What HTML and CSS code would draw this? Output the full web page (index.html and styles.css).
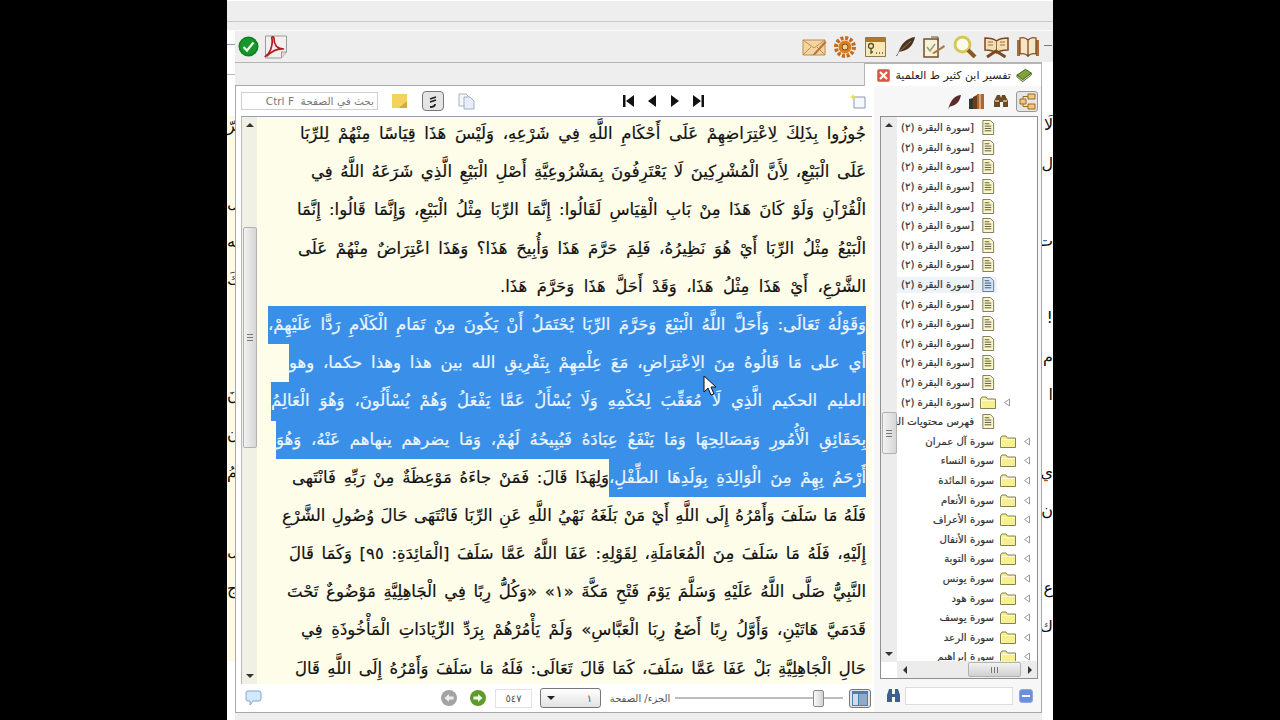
FILE: index.html
```html
<!DOCTYPE html>
<html lang="ar">
<head>
    <meta charset="UTF-8">
    <title>تفسير ابن كثير</title>
    <link rel="stylesheet" href="styles.css">
</head>
<body>
<svg class="defs" width="0" height="0">
    <symbol id="file" viewBox="0 0 15 16">
        <path d="M2 .5h8l3.5 3.5v11.5H2z" fill="#fbf6c8" stroke="#77745a"/>
        <path d="M4 4h5M4 6.5h7M4 9h7M4 11.500h7" stroke="#55523a"/>
    </symbol>
    <symbol id="file-blue" viewBox="0 0 15 16">
        <path d="M2 .5h8l3.500 3.500v11.500H2z" fill="#d6e6f7" stroke="#5f7890"/>
        <path d="M4 4h5M4 6.500h7M4 9h7M4 11.500h7" stroke="#33506b"/>
    </symbol>
    <symbol id="folder" viewBox="0 0 16 14">
        <path d="M.5 13V3.500l1.500-2h4l1.500 2h8V13z" fill="#f7f08f" stroke="#85824f"/>
        <path d="M1.500 12V5h13.500" fill="none" stroke="#fffbd0"/>
    </symbol>
    <symbol id="open" viewBox="0 0 8 9">
        <path d="M6.500 1v7L1.500 4.500z" fill="#fff" stroke="#9a9a9a"/>
    </symbol>
</svg>

<div class="window">
    <div class="top-strip"></div>
    <div class="body-row">
        <div class="behind behind-left">
            <span>لرّ</span><span></span><span>ال</span><span>يه</span><span>كَ</span><span></span><span></span><span>نَ</span><span>ن</span><span>مُ</span><span></span><span>ال</span><span>ج</span>
        </div>

        <div class="main">
            <div class="toolbar">
                <div class="tool-group">
                    <svg width="21" height="21" viewBox="0 0 21 21"><circle cx="10.500" cy="10.500" r="10" fill="#0d7f1e"/><circle cx="10.500" cy="10.500" r="8.500" fill="#16962b"/><path d="M5.500 11l3.500 3.500 6.500-8" fill="none" stroke="#eafbe8" stroke-width="2.200"/></svg>
                    <svg width="24" height="24" viewBox="0 0 24 24"><path d="M1.500 1h21v16l-5 6H1.500z" fill="#f1f0ee" stroke="#9a9a9a"/><path d="M17.500 23v-6h5" fill="#ddd" stroke="#9a9a9a"/><path d="M2 21c4-3 7-10 6-17-1-3 2-3 2 0 0 6 3 10 10 10-7-1-12 2-17 7z" fill="none" stroke="#b01c22" stroke-width="1.700"/></svg>
                </div>
                <div class="tool-group tool-right">
                    <svg width="25" height="20" viewBox="0 0 25 20"><path d="M1 3h22v15H1z" fill="#f3d5a5" stroke="#c08a4c"/><path d="M1 3l11 8 11-8M1 18l8-8M23 18l-8-8" fill="none" stroke="#c08a4c"/><path d="M12 16l11-12 1.500 1.500-11 12-3 1z" fill="#b8743a"/></svg>
                    <svg width="22" height="22" viewBox="0 0 22 22"><circle cx="11" cy="11" r="9" fill="none" stroke="#c46a1c" stroke-width="4" stroke-dasharray="3 1.700"/><circle cx="11" cy="11" r="6.500" fill="#d9801f"/><circle cx="11" cy="11" r="3" fill="#f2cf9a" stroke="#8a4a12"/></svg>
                    <svg class="tool-wide" width="21" height="20" viewBox="0 0 21 20"><path d="M.5.500h20v19H.5z" fill="#f7e9b5" stroke="#8a7a50"/><path d="M1 1h19v4H1z" fill="#b5742c"/><circle cx="6" cy="9" r="2.500" fill="none" stroke="#5b5030" stroke-width="1.300"/><path d="M6 11.500V17M6 15h2M11 16h1M14 16h1M17 16h1" stroke="#5b5030" stroke-width="1.300"/></svg>
                    <svg width="21" height="21" viewBox="0 0 21 21"><path d="M1 20c1-1 2-3 3-5C6 8 12 2 20 1c-1 5-4 12-12 14l-4 1-2 4z" fill="#4a3320"/><path d="M4 16L16 5" stroke="#a58a60" stroke-width=".8"/></svg>
                    <svg width="23" height="22" viewBox="0 0 23 22"><path d="M1 3h14v18H1z" fill="#f9f1d8" stroke="#6d4f2f" stroke-width="1.500"/><path d="M8 1h7v4" fill="none" stroke="#6d4f2f"/><path d="M4 11l3 4 5-7" fill="none" stroke="#9a9a7a" stroke-width="1.500"/><path d="M9 17l12-8 1 2-11 7z" fill="#a87b45"/></svg>
                    <svg width="24" height="23" viewBox="0 0 24 23"><circle cx="9.500" cy="9.500" r="7.500" fill="#fafbf0" stroke="#d7c75a" stroke-width="3"/><path d="M15 15l7 7" stroke="#8a5a22" stroke-width="4"/></svg>
                    <svg width="25" height="22" viewBox="0 0 25 22"><path d="M1 2c4 0 8 0 11.500 3C16 2 20 2 24 2v12c-4 0-8 0-11.500 3C9 14 5 14 1 14z" fill="#f4dfb5" stroke="#7c4a22" stroke-width="1.500"/><path d="M12.500 5v12M4 6h5M4 9h5M16 6h5M16 9h5" stroke="#9a7040"/><path d="M3 21l9-6 9.500 6" fill="none" stroke="#7c4a22" stroke-width="3"/></svg>
                    <svg width="24" height="21" viewBox="0 0 24 21"><path d="M1 4h3v16H1zM20 4h3v16h-3z" fill="#a66e3a"/><path d="M4 2c3-1 6 0 8 2v16c-2-2-5-3-8-2zM20 2c-3-1-6 0-8 2v16c2-2 5-3 8-2z" fill="#f6e6c6" stroke="#7c4a22" stroke-width="1.300"/></svg>
                </div>
            </div>

            <div class="tab-row">
                <div class="tab">
                    <svg width="17" height="14" viewBox="0 0 17 14"><path d="M1 7l9-6 6 4-9 7z" fill="#7fa23a" stroke="#47631c"/><path d="M1 7v2l6 5 9-7V5l-9 7z" fill="#e6e6d0" stroke="#47631c"/></svg>
                    <span class="tab-title">تفسير ابن كثير ط العلمية</span>
                    <span class="tab-close">
                        <svg width="9" height="9" viewBox="0 0 9 9"><path d="M1 1l7 7M8 1L1 8" stroke="#fff" stroke-width="2.200"/></svg>
                    </span>
                </div>
            </div>

            <div class="workspace">
                <div class="reader">
                    <div class="reader-bar">
                        <div class="page-search">بحث في الصفحة &nbsp;<span dir="ltr">Ctrl F</span></div>
                        <svg class="ic-note" width="15" height="14" viewBox="0 0 15 14"><path d="M0 0h15v14H0z" fill="#f3d35c"/><path d="M15 14H7l8-7z" fill="#d8a93a"/></svg>
                        <span class="toggle-btn">
                            <svg width="12" height="13" viewBox="0 0 12 13"><path d="M3 4l6-2M3 7l6-2M3 12c3 0 5-1 5-3" fill="none" stroke="#222" stroke-width="1.800"/></svg>
                        </span>
                        <svg class="ic-pages" width="17" height="17" viewBox="0 0 17 17"><path d="M1 1h7l3 3v9H1z" fill="#f3f6fb" stroke="#9fb0c8"/><path d="M6 4h6l4 4v8H6z" fill="#e8eef7" stroke="#9fb0c8"/></svg>
                        <div class="pager">
                            <svg width="13" height="12" viewBox="0 0 13 12"><path d="M1 0h2.500v12H1zM12 0v12L4 6z" fill="#111"/></svg>
                            <svg width="9" height="12" viewBox="0 0 9 12"><path d="M8 0v12L0 6z" fill="#111"/></svg>
                            <svg width="9" height="12" viewBox="0 0 9 12"><path d="M1 0v12l8-6z" fill="#111"/></svg>
                            <svg width="13" height="12" viewBox="0 0 13 12"><path d="M12 0H9.500v12H12zM1 0v12l8-6z" fill="#111"/></svg>
                        </div>
                        <svg class="ic-new" width="16" height="15" viewBox="0 0 16 15"><path d="M4 3h11v11H4z" fill="#f5f8fc" stroke="#8a98a8"/><path d="M3 0l1 2 2 1-2 1-1 2-1-2-2-1 2-1z" fill="#e8e04a"/></svg>
                    </div>

                    <div class="page">
                        <div class="v-scroll">
                            <span class="arr-up"></span>
                            <span class="v-track"></span>
                            <span class="v-thumb"><i></i></span>
                            <span class="v-track v-track-low"></span>
                            <span class="arr-down"></span>
                        </div>
                        <div class="page-text" dir="rtl">
                            <div class="line">جُوزُوا بِذَلِكَ لِاعْتِرَاضِهِمْ عَلَى أَحْكَامِ اللَّهِ فِي شَرْعِهِ، وَلَيْسَ هَذَا قِيَاسًا مِنْهُمْ لِلرِّبَا</div>
                            <div class="line">عَلَى الْبَيْعِ، لِأَنَّ الْمُشْرِكِينَ لَا يَعْتَرِفُونَ بِمَشْرُوعِيَّةِ أَصْلِ الْبَيْعِ الَّذِي شَرَعَهُ اللَّهُ فِي</div>
                            <div class="line">الْقُرْآنِ وَلَوْ كَانَ هَذَا مِنْ بَابِ الْقِيَاسِ لَقَالُوا: إِنَّمَا الرِّبَا مِثْلُ الْبَيْعِ، وَإِنَّمَا قَالُوا: إِنَّمَا</div>
                            <div class="line">الْبَيْعُ مِثْلُ الرِّبَا أَيْ هُوَ نَظِيرُهُ، فَلِمَ حَرَّمَ هَذَا وَأُبِيحَ هَذَا؟ وَهَذَا اعْتِرَاضٌ مِنْهُمْ عَلَى</div>
                            <div class="line">الشَّرْعِ، أَيْ هَذَا مِثْلُ هَذَا، وَقَدْ أَحَلَّ هَذَا وَحَرَّمَ هَذَا.</div>
                            <div class="line sel">وَقَوْلُهُ تَعَالَى: وَأَحَلَّ اللَّهُ الْبَيْعَ وَحَرَّمَ الرِّبَا يُحْتَمَلُ أَنْ يَكُونَ مِنْ تَمَامِ الْكَلَامِ رَدًّا عَلَيْهِمْ،</div>
                            <div class="line sel">أي على مَا قَالُوهُ مِنَ الِاعْتِرَاضِ، مَعَ عِلْمِهِمْ بِتَفْرِيقِ الله بين هذا وهذا حكما، وهو</div>
                            <div class="line sel">العليم الحكيم الَّذِي لَا مُعَقِّبَ لِحُكْمِهِ وَلَا يُسْأَلُ عَمَّا يَفْعَلُ وَهُمْ يُسْأَلُونَ، وَهُوَ الْعَالِمُ</div>
                            <div class="line sel">بِحَقَائِقِ الْأُمُورِ وَمَصَالِحِهَا وَمَا يَنْفَعُ عِبَادَهُ فَيُبِيحُهُ لَهُمْ، وَمَا يضرهم ينهاهم عَنْهُ، وَهُوَ</div>
                            <div class="line split">
                                <span class="part sel">أَرْحَمُ بِهِمْ مِنَ الْوَالِدَةِ بِوَلَدِهَا الطِّفْلِ،</span>
                                <span class="part rest">وَلِهَذَا قَالَ: فَمَنْ جاءَهُ مَوْعِظَةٌ مِنْ رَبِّهِ فَانْتَهى</span>
                            </div>
                            <div class="line">فَلَهُ مَا سَلَفَ وَأَمْرُهُ إِلَى اللَّهِ أَيْ مَنْ بَلَغَهُ نَهْيُ اللَّهِ عَنِ الرِّبَا فَانْتَهَى حَالَ وُصُولِ الشَّرْعِ</div>
                            <div class="line">إِلَيْهِ، فَلَهُ مَا سَلَفَ مِنَ الْمُعَامَلَةِ، لِقَوْلِهِ: عَفَا اللَّهُ عَمَّا سَلَفَ [الْمَائِدَةِ: ٩٥] وَكَمَا قَالَ</div>
                            <div class="line">النَّبِيُّ صَلَّى اللَّهُ عَلَيْهِ وَسَلَّمَ يَوْمَ فَتْحِ مَكَّةَ «١» «وَكُلُّ رِبًا فِي الْجَاهِلِيَّةِ مَوْضُوعٌ تَحْتَ</div>
                            <div class="line">قَدَمَيَّ هَاتَيْنِ، وَأَوَّلُ رِبًا أَضَعُ رِبَا الْعَبَّاسِ» وَلَمْ يَأْمُرْهُمْ بِرَدِّ الزِّيَادَاتِ الْمَأْخُوذَةِ فِي</div>
                            <div class="line">حَالِ الْجَاهِلِيَّةِ بَلْ عَفَا عَمَّا سَلَفَ، كَمَا قَالَ تَعَالَى: فَلَهُ مَا سَلَفَ وَأَمْرُهُ إِلَى اللَّهِ قَالَ</div>
                        </div>
                    </div>

                    <div class="status-bar">
                        <svg class="ic-chat" width="17" height="16" viewBox="0 0 17 16"><path d="M3 1h11q2 0 2 2v6q0 2-2 2H8l-3 4v-4H3q-2 0-2-2V3q0-2 2-2z" fill="#d3e8fa" stroke="#7fa9cc"/></svg>
                        <svg class="ic-back" width="16" height="16" viewBox="0 0 16 16"><circle cx="8" cy="8" r="8" fill="#a3a3a3"/><path d="M3.500 8L8 4v2.500h4.500v3H8V12z" fill="#eee"/></svg>
                        <svg class="ic-fwd" width="16" height="16" viewBox="0 0 16 16"><circle cx="8" cy="8" r="8" fill="#5f9a2e"/><path d="M12.500 8L8 4v2.500H3.500v3H8V12z" fill="#f1f7e5"/></svg>
                        <div class="page-num">٥٤٧</div>
                        <div class="part-select"><span class="select-arrow"></span><span>١</span></div>
                        <div class="page-label">الجزء/ الصفحة</div>
                        <div class="slider"><span class="slider-thumb"></span></div>
                        <span class="view-btn">
                            <svg width="16" height="15" viewBox="0 0 16 15"><path d="M0 0h16v15H0z" fill="#4d7fae"/><path d="M1 3h5v11H1z" fill="#cfdbe8"/><path d="M7 3h8v11H7z" fill="#8eaac6"/></svg>
                        </span>
                    </div>
                </div>

                <div class="side">
                    <div class="side-bar">
                        <span class="side-active">
                            <svg width="17" height="17" viewBox="0 0 17 17"><path d="M9 1h7v5H9zM1 6h6v5H1zM9 11h7v5H9z" fill="#f4c879" stroke="#9a6a28"/><path d="M9 3.500H4V6M4 11v2.500h5" fill="none" stroke="#9a6a28"/></svg>
                        </span>
                        <svg width="16" height="14" viewBox="0 0 16 14"><path d="M1 7l3-6h3l1 3 1-3h3l3 6v6h-5V8H7v5H1z" fill="#6b4a28"/><path d="M2 7h4M10 7h4" stroke="#e6c890" stroke-width="1.500"/></svg>
                        <svg width="17" height="15" viewBox="0 0 17 15"><path d="M0 5l4-1v11H0z" fill="#2c3b2c"/><path d="M4 3l4-2v14H4z" fill="#6b3d22"/><path d="M8 0h7v15H8z" fill="#a5683a"/><path d="M10 0h2v15h-2z" fill="#d8a878"/></svg>
                        <svg width="15" height="15" viewBox="0 0 15 15"><path d="M1 15c1-2 1-4 3-7 2-4 6-7 10-7-1 5-3 9-9 11l-2 .500z" fill="#5e2a2a"/></svg>
                    </div>

                    <div class="tree" dir="rtl">
                        <div class="tree-rows">
                            <div class="row lvl1"><svg class="slot"></svg><svg class="ic"><use href="#file"/></svg><span>[سورة البقرة (٢)</span></div>
                            <div class="row lvl1"><svg class="slot"></svg><svg class="ic"><use href="#file"/></svg><span>[سورة البقرة (٢)</span></div>
                            <div class="row lvl1"><svg class="slot"></svg><svg class="ic"><use href="#file"/></svg><span>[سورة البقرة (٢)</span></div>
                            <div class="row lvl1"><svg class="slot"></svg><svg class="ic"><use href="#file"/></svg><span>[سورة البقرة (٢)</span></div>
                            <div class="row lvl1"><svg class="slot"></svg><svg class="ic"><use href="#file"/></svg><span>[سورة البقرة (٢)</span></div>
                            <div class="row lvl1"><svg class="slot"></svg><svg class="ic"><use href="#file"/></svg><span>[سورة البقرة (٢)</span></div>
                            <div class="row lvl1"><svg class="slot"></svg><svg class="ic"><use href="#file"/></svg><span>[سورة البقرة (٢)</span></div>
                            <div class="row lvl1"><svg class="slot"></svg><svg class="ic"><use href="#file"/></svg><span>[سورة البقرة (٢)</span></div>
                            <div class="row lvl1 current"><svg class="slot"></svg><svg class="ic"><use href="#file-blue"/></svg><span>[سورة البقرة (٢)</span></div>
                            <div class="row lvl1"><svg class="slot"></svg><svg class="ic"><use href="#file"/></svg><span>[سورة البقرة (٢)</span></div>
                            <div class="row lvl1"><svg class="slot"></svg><svg class="ic"><use href="#file"/></svg><span>[سورة البقرة (٢)</span></div>
                            <div class="row lvl1"><svg class="slot"></svg><svg class="ic"><use href="#file"/></svg><span>[سورة البقرة (٢)</span></div>
                            <div class="row lvl1"><svg class="slot"></svg><svg class="ic"><use href="#file"/></svg><span>[سورة البقرة (٢)</span></div>
                            <div class="row lvl1"><svg class="slot"></svg><svg class="ic"><use href="#file"/></svg><span>[سورة البقرة (٢)</span></div>
                            <div class="row lvl1"><svg class="slot"><use href="#open"/></svg><svg class="ic"><use href="#folder"/></svg><span>[سورة البقرة (٢)</span></div>
                            <div class="row lvl1"><svg class="slot"></svg><svg class="ic"><use href="#file"/></svg><span>فهرس محتويات الجزء</span></div>
                            <div class="row"><svg class="slot"><use href="#open"/></svg><svg class="ic"><use href="#folder"/></svg><span>سورة آل عمران</span></div>
                            <div class="row"><svg class="slot"><use href="#open"/></svg><svg class="ic"><use href="#folder"/></svg><span>سورة النساء</span></div>
                            <div class="row"><svg class="slot"><use href="#open"/></svg><svg class="ic"><use href="#folder"/></svg><span>سورة المائدة</span></div>
                            <div class="row"><svg class="slot"><use href="#open"/></svg><svg class="ic"><use href="#folder"/></svg><span>سورة الأنعام</span></div>
                            <div class="row"><svg class="slot"><use href="#open"/></svg><svg class="ic"><use href="#folder"/></svg><span>سورة الأعراف</span></div>
                            <div class="row"><svg class="slot"><use href="#open"/></svg><svg class="ic"><use href="#folder"/></svg><span>سورة الأنفال</span></div>
                            <div class="row"><svg class="slot"><use href="#open"/></svg><svg class="ic"><use href="#folder"/></svg><span>سورة التوبة</span></div>
                            <div class="row"><svg class="slot"><use href="#open"/></svg><svg class="ic"><use href="#folder"/></svg><span>سورة يونس</span></div>
                            <div class="row"><svg class="slot"><use href="#open"/></svg><svg class="ic"><use href="#folder"/></svg><span>سورة هود</span></div>
                            <div class="row"><svg class="slot"><use href="#open"/></svg><svg class="ic"><use href="#folder"/></svg><span>سورة يوسف</span></div>
                            <div class="row"><svg class="slot"><use href="#open"/></svg><svg class="ic"><use href="#folder"/></svg><span>سورة الرعد</span></div>
                            <div class="row"><svg class="slot"><use href="#open"/></svg><svg class="ic"><use href="#folder"/></svg><span>سورة إبراهيم</span></div>
                        </div>
                        <div class="tree-scroll">
                            <span class="arr-up"></span>
                            <span class="tree-thumb"><i></i></span>
                            <span class="arr-down"></span>
                        </div>
                        <div class="tree-hscroll">
                            <span class="arr-right"></span>
                            <span class="h-thumb"><i></i></span>
                            <span class="arr-left"></span>
                        </div>
                    </div>

                    <div class="side-search">
                        <svg width="15" height="13" viewBox="0 0 15 13"><path d="M1 6l2-6h3v5h3V0h3l2 6v7H9V8H6v5H1z" fill="#3f5f8f"/></svg>
                        <div class="side-input"></div>
                        <span class="minus-btn"><i></i></span>
                    </div>
                </div>
            </div>
        </div>

        <div class="behind behind-right">
            <span>لَا</span><span>ل</span><span></span><span>ت</span><span></span><span>!</span><span>م</span><span>ا</span><span></span><span>ي</span><span>ن</span><span></span><span>ع</span><span>ك</span>
        </div>
    </div>

    <svg class="cursor" width="14" height="22" viewBox="0 0 14 22"><path d="M1 1v16l4-4 3 7 3-1-3-7h5z" fill="#fff" stroke="#111"/></svg>
</div>
</body>
</html>
```

FILE: styles.css
```css
body {
    margin: 0;
    background: #000;
    font-family: "DejaVu Sans", sans-serif;
}

.defs {
    position: absolute;
}

.window {
    position: relative;
    width: 826px;
    height: 720px;
    margin-left: 227px;
    background: #eeeeee;
    overflow: hidden;
    display: flex;
    flex-direction: column;
}

.top-strip {
    height: 20px;
    margin-bottom: 8px;
    border-top: 1px solid #fff;
    border-bottom: 1px solid #c9c9c9;
    flex: none;
}

.body-row {
    display: flex;
    flex: 1;
    min-height: 0;
    border-top: 1px solid #fafafa;
}

/* the other windows that show at the sides */
.behind {
    flex: none;
    display: flex;
    flex-direction: column;
    overflow: hidden;
    font-size: 16px;
    color: #111;
}

.behind span {
    height: 38.6px;
    flex: none;
    white-space: nowrap;
}

.behind-left {
    width: 8px;
    padding-top: 85px;
    align-items: flex-start;
    background:
        linear-gradient(#9a9a9a, #9a9a9a) 0 13px / 100% 1px no-repeat,
        linear-gradient(#b5b5b5, #b5b5b5) 0 43px / 100% 1px no-repeat,
        linear-gradient(#fff, #fff) 0 630px / 100% 60px no-repeat,
        linear-gradient(#fff, #fff) 0 0 / 100% 85px no-repeat,
        #fdfbe6;
}

.behind-right {
    width: 11px;
    padding-top: 84px;
    align-items: flex-end;
    background:
        linear-gradient(#777, #777) 2px 14px / 8px 1px no-repeat,
        linear-gradient(#eeeeee, #eeeeee) 0 0 / 100% 31px no-repeat,
        #fff;
}

.main {
    width: 807px;
    flex: none;
    display: flex;
    flex-direction: column;
}

.toolbar {
    height: 31px;
    flex: none;
    display: flex;
    justify-content: space-between;
    align-items: center;
    padding: 0 2px 0 3px;
    border-bottom: 1px solid #b5b5b5;
}

.tool-group {
    display: flex;
    align-items: center;
    gap: 5px;
}

.tool-right {
    gap: 7px;
}

.tool-wide {
    margin: 0 2px;
}

.tab-row {
    height: 22px;
    flex: none;
    display: flex;
    justify-content: flex-end;
}

.tab {
    width: 178px;
    height: 23px;
    box-sizing: border-box;
    background: #fff;
    border: 1px solid #b5b5b5;
    border-bottom: 0;
    display: flex;
    flex-direction: row-reverse;
    align-items: center;
    gap: 5px;
    padding-left: 12px;
    justify-content: flex-end;
    position: relative;
    z-index: 1;
}

.tab > svg {
    margin-right: 9px;
}

.tab-title {
    font-size: 11px;
    color: #222;
    white-space: nowrap;
}

.tab-close {
    width: 14px;
    height: 13px;
    border-radius: 2px;
    background: #e2543f;
    border: 1px solid #c7876f;
    box-sizing: border-box;
    display: flex;
    align-items: center;
    justify-content: center;
    margin-right: auto;
}

.workspace {
    height: 628px;
    box-sizing: border-box;
    flex: none;
    display: flex;
    border: 1px solid #a8a8a8;
    background: #f7f7f7;
}

.reader {
    width: 638px;
    flex: none;
    display: flex;
    flex-direction: column;
    background: #fff;
}

.reader-bar {
    height: 30px;
    flex: none;
    display: flex;
    align-items: center;
    padding-left: 5px;
}

.page-search {
    width: 137px;
    height: 18px;
    box-sizing: border-box;
    border: 1px solid #cfcfcf;
    background: #fff;
    padding-right: 3px;
    font-size: 10.500px;
    line-height: 17px;
    color: #777;
    direction: rtl;
    white-space: nowrap;
    overflow: hidden;
}

.ic-note {
    margin-left: 14px;
}

.toggle-btn {
    width: 22px;
    height: 20px;
    box-sizing: border-box;
    margin-left: 15px;
    border: 1px solid #777;
    border-radius: 4px;
    background: #e4e4e4;
    display: flex;
    align-items: center;
    justify-content: center;
}

.ic-pages {
    margin-left: 14px;
}

.pager {
    display: flex;
    align-items: center;
    gap: 13px;
    margin-left: 147px;
}

.ic-new {
    margin-left: auto;
    margin-right: 8px;
}

.page {
    height: 568px;
    flex: none;
    margin-left: 5px;
    margin-right: 2px;
    display: flex;
    border-top: 1px solid #93a0ad;
    border-left: 1px solid #b8b8b8;
    box-sizing: border-box;
    background: #fefde9;
    overflow: hidden;
}

.v-scroll {
    width: 15px;
    flex: none;
    display: flex;
    flex-direction: column;
    align-items: center;
    background: #f1f0e4;
}

.v-track {
    height: 94px;
    flex: none;
}

.v-track-low {
    height: auto;
    flex: 1;
}

.v-thumb {
    height: 221px;
    width: 14px;
    flex: none;
    box-sizing: border-box;
    border: 1px solid #b2b2b2;
    border-radius: 2px;
    background: linear-gradient(to right, #f2f2f2, #d6d6d6);
    display: flex;
    align-items: center;
    justify-content: center;
}

.v-thumb i,
.tree-thumb i {
    width: 6px;
    height: 7px;
    background: repeating-linear-gradient(to bottom, #777 0 1px, transparent 1px 3px);
}

.h-thumb i {
    width: 7px;
    height: 6px;
    background: repeating-linear-gradient(to right, #777 0 1px, transparent 1px 3px);
}

.arr-up,
.arr-down {
    width: 0;
    height: 0;
    flex: none;
    margin: 6px 0;
    border-left: 4px solid transparent;
    border-right: 4px solid transparent;
}

.arr-up {
    border-bottom: 4px solid #333;
}

.arr-down {
    border-top: 4px solid #333;
}

.arr-left,
.arr-right {
    width: 0;
    height: 0;
    flex: none;
    border-top: 4px solid transparent;
    border-bottom: 4px solid transparent;
}

.arr-left {
    border-left: 4px solid #333;
}

.arr-right {
    border-right: 4px solid #333;
}

.page-text {
    flex: 1;
    margin-top: -2px;
    padding-right: 6px;
    font-size: 16.500px;
    -webkit-text-stroke: .2px currentColor;
    color: #111;
    display: flex;
    flex-direction: column;
    align-items: flex-start;
}

/* each printed line keeps its own measure, so the right edge is flush and the left is free */
.line {
    height: 38.200px;
    line-height: 38.200px;
    flex: none;
    white-space: nowrap;
    text-align: justify;
    text-align-last: justify;
    box-sizing: border-box;
}

.line:nth-child(1) { width: 566px; }
.line:nth-child(2) { width: 555px; }
.line:nth-child(3) { width: 569px; }
.line:nth-child(4) { width: 568px; }
.line:nth-child(5) { width: 366px; }
.line:nth-child(6) { width: 598px; }
.line:nth-child(7) { width: 577px; }
.line:nth-child(8) { width: 595px; }
.line:nth-child(9) { width: 590px; }
.line:nth-child(10) { width: 574px; }
.line:nth-child(11) { width: 584px; }
.line:nth-child(12) { width: 577px; }
.line:nth-child(13) { width: 579px; }
.line:nth-child(14) { width: 565px; }
.line:nth-child(15) { width: 571px; }

.sel {
    background: #3a8fe8;
    color: #eef6fe;
}

.split {
    display: flex;
    text-align-last: auto;
}

.part {
    flex: none;
    text-align-last: justify;
}

.part.sel {
    width: 257px;
}

.part.rest {
    width: 317px;
}

.status-bar {
    height: 28px;
    flex: none;
    display: flex;
    align-items: center;
    padding-left: 9px;
    font-size: 10px;
    color: #555;
}

.status-bar > * {
    flex: none;
}

.ic-back {
    margin-left: 179px;
}

.ic-fwd {
    margin-left: 13px;
}

.page-num {
    width: 37px;
    height: 19px;
    box-sizing: border-box;
    margin-left: 9px;
    border: 1px solid #e2e2e2;
    text-align: center;
    line-height: 17px;
}

.part-select {
    width: 61px;
    height: 20px;
    box-sizing: border-box;
    margin-left: 8px;
    border: 1px solid #777;
    border-radius: 3px;
    background: linear-gradient(to bottom, #fff, #e2e2e2);
    display: flex;
    align-items: center;
    justify-content: space-between;
    padding: 0 8px 0 6px;
}

.select-arrow {
    width: 0;
    height: 0;
    border-left: 4px solid transparent;
    border-right: 4px solid transparent;
    border-top: 4px solid #222;
}

.page-label {
    width: 66px;
    margin-left: 6px;
    text-align: center;
    white-space: nowrap;
    direction: rtl;
}

.slider {
    width: 168px;
    height: 18px;
    margin-left: 2px;
    display: flex;
    align-items: center;
    justify-content: flex-end;
    padding-right: 19px;
    box-sizing: border-box;
    background: linear-gradient(#bdbdbd, #bdbdbd) center / 100% 2px no-repeat;
}

.slider-thumb {
    width: 11px;
    height: 17px;
    box-sizing: border-box;
    border: 1px solid #8a8a8a;
    border-radius: 2px;
    background: linear-gradient(to right, #fafafa, #d2d2d2);
}

.view-btn {
    width: 22px;
    height: 19px;
    box-sizing: border-box;
    margin-left: 6px;
    border: 1px solid #777;
    border-radius: 3px;
    background: #e4e4e4;
    display: flex;
    align-items: center;
    justify-content: center;
}

.side {
    flex: 1;
    min-width: 0;
    display: flex;
    flex-direction: column;
    padding-left: 6px;
    background: #f7f7f7;
}

.side-bar {
    height: 30px;
    flex: none;
    display: flex;
    flex-direction: row-reverse;
    align-items: center;
    gap: 7px;
    padding-right: 3px;
}

.side-active {
    width: 22px;
    height: 21px;
    box-sizing: border-box;
    border: 1px solid #999;
    border-radius: 3px;
    background: #e6e6e6;
    display: flex;
    align-items: center;
    justify-content: center;
}

.tree {
    width: 158px;
    height: 563px;
    box-sizing: border-box;
    position: relative;
    flex: none;
    border: 1px solid #8f8f8f;
    background: #fff;
    overflow: hidden;
}

.tree-rows {
    padding-top: 1px;
    margin-left: 16px;
    height: 544px;
    overflow: hidden;
}

.row {
    height: 19.600px;
    box-sizing: border-box;
    display: flex;
    align-items: center;
    padding-right: 3px;
    font-size: 10.200px;
    -webkit-text-stroke: .2px currentColor;
    color: #333;
    white-space: nowrap;
}

.lvl1 {
    padding-right: 23px;
}

.row .slot {
    width: 14px;
    height: 9px;
    flex: none;
}

.row .ic {
    width: 16px;
    height: 15px;
    flex: none;
    margin-right: 4px;
    margin-left: 6px;
}

.row.current {
    background: linear-gradient(#eef3f8, #eef3f8) left center / 100px 16px no-repeat;
}

/* these scrollbars float over the tree's own edges */
.tree-scroll {
    position: absolute;
    left: 0;
    top: 0;
    width: 16px;
    height: 545px;
    background: #ececec;
    display: flex;
    flex-direction: column;
    align-items: center;
}

.tree-thumb {
    width: 15px;
    height: 42px;
    margin-top: 279px;
    box-sizing: border-box;
    border: 1px solid #b2b2b2;
    border-radius: 2px;
    background: linear-gradient(to right, #f2f2f2, #d6d6d6);
    display: flex;
    align-items: center;
    justify-content: center;
}

.tree-scroll .arr-down {
    margin-top: auto;
}

.tree-hscroll {
    position: absolute;
    left: 16px;
    right: 0;
    bottom: 0;
    height: 17px;
    background: #ececec;
    display: flex;
    align-items: center;
    padding: 0 5px 0 6px;
    direction: ltr;
}

.h-thumb {
    width: 53px;
    height: 15px;
    margin-left: 61px;
    box-sizing: border-box;
    border: 1px solid #b2b2b2;
    border-radius: 2px;
    background: linear-gradient(to bottom, #f2f2f2, #d0d0d0);
    display: flex;
    align-items: center;
    justify-content: center;
}

.tree-hscroll .arr-left {
    margin-left: auto;
}

.side-search {
    flex: 1;
    display: flex;
    align-items: center;
    padding-left: 6px;
}

.side-input {
    width: 108px;
    height: 18px;
    margin-left: 4px;
    box-sizing: border-box;
    border: 1px solid #dcdcdc;
    background: #fff;
}

.minus-btn {
    width: 14px;
    height: 14px;
    margin-left: 6px;
    border-radius: 3px;
    background: #6b8fdc;
    border: 1px solid #8fa6d8;
    box-sizing: border-box;
    display: flex;
    align-items: center;
    justify-content: center;
}

.minus-btn i {
    width: 8px;
    height: 2px;
    background: #fff;
}

.cursor {
    position: absolute;
    left: 476px;
    top: 375px;
}
```
